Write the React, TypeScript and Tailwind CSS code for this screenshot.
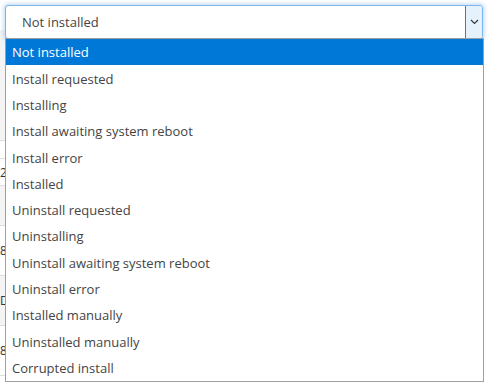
import React from "react";

const options = [
  "Not installed",
  "Install requested",
  "Installing",
  "Install awaiting system reboot",
  "Install error",
  "Installed",
  "Uninstall requested",
  "Uninstalling",
  "Uninstall awaiting system reboot",
  "Uninstall error",
  "Installed manually",
  "Uninstalled manually",
  "Corrupted install",
];

export default function App() {
  return (
    <div
      className="relative w-[488px] h-[386px] bg-white overflow-hidden"
      style={{ fontFamily: '"Open Sans", "Noto Sans", Arial, sans-serif' }}
    >
      {/* background page content peeking at the left */}
      <div className="absolute left-0 top-[30px] w-[12px] flex flex-col">
        <div className="h-[110px] bg-[#f4f4f4]" />
        <div className="h-[18px] border-t border-[#dddddd]" />
        <div className="h-[27px] border-t border-[#dddddd] text-[12px] leading-[27px] text-[#333]">2</div>
        <div className="h-[40px] border-t border-[#dddddd] bg-[#f4f4f4]" />
        <div className="h-[50px] border-t border-[#dddddd] text-[12px] leading-[50px] text-[#333]">8</div>
        <div className="h-[50px] border-t border-[#dddddd] bg-[#f4f4f4] text-[12px] leading-[50px] text-[#333]">D</div>
        <div className="h-[50px] border-t border-[#dddddd] text-[12px] leading-[50px] text-[#333]">8</div>
        <div className="h-[20px] border-t border-[#dddddd]" />
      </div>

      {/* select box */}
      <div className="relative ml-[5px] mt-[5px] w-[478px] h-[34px] rounded-[3px] border border-[#7eb4ea] bg-white shadow-[0_0_4px_1px_rgba(126,180,234,0.55)] flex items-center">
        <span className="pl-[16px] pt-[2px] text-[13px] text-[#444]">Not installed</span>
        <div className="ml-auto w-[17px] h-[32px] bg-[#e5f1fb] border-l border-[#3c7fb1] flex items-center justify-center rounded-r-[2px]">
          <svg width="9" height="6" viewBox="0 0 9 6">
            <path d="M1 1 L4.5 4.5 L8 1" fill="none" stroke="#333" strokeWidth="1.1" />
          </svg>
        </div>
      </div>

      {/* dropdown list */}
      <div className="absolute left-[5px] top-[38px] w-[479px] bg-white border border-[#a0a0a0] flex flex-col">
        {options.map((o, i) => (
          <div
            key={o}
            className={
              "h-[26.3px] flex items-center pl-[6px] pt-[2px] text-[13px] " +
              (i === 0 ? "bg-[#0078d7] text-white" : "text-[#444]")
            }
          >
            {o}
          </div>
        ))}
      </div>
    </div>
  );
}
